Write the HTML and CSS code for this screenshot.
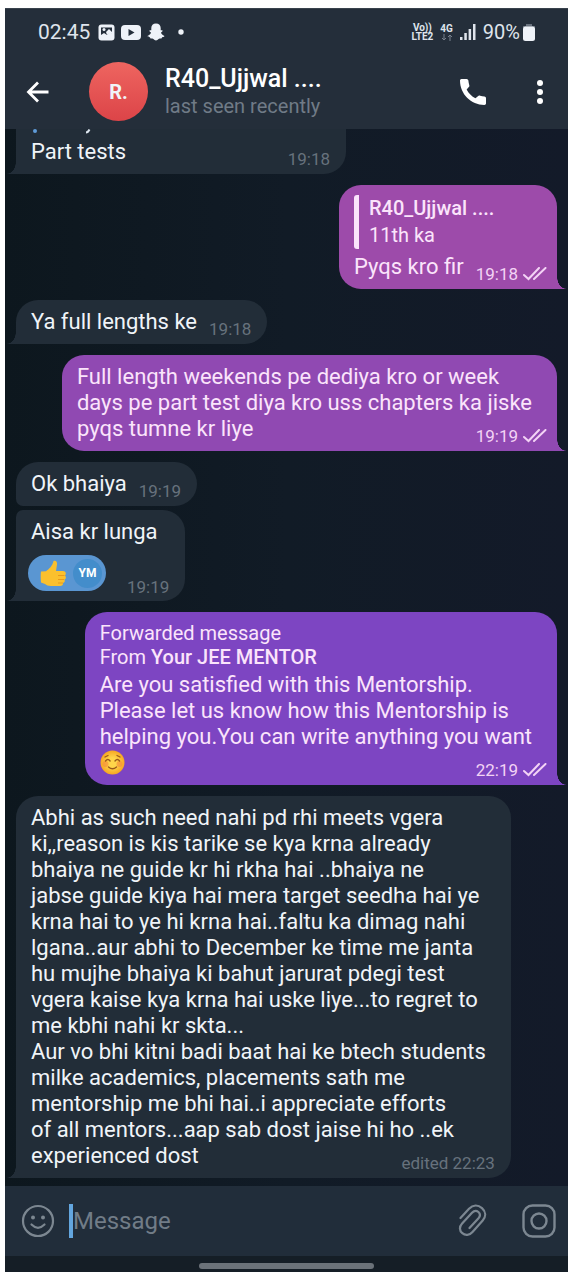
FILE: index.html
```html
<!DOCTYPE html>
<html lang="en">
<head>
<meta charset="utf-8">
<meta name="viewport" content="width=device-width, initial-scale=1">
<title>R40_Ujjwal ....</title>
<link rel="stylesheet" href="styles.css">
</head>
<body>
<svg class="defs" aria-hidden="true">
  <symbol id="checks" viewBox="0 0 24 14"><path d="M1 8l4.500 4L16 1M11 12L22.500 1" fill="none" stroke="currentColor" stroke-width="2" stroke-linecap="round"/></symbol>
</svg>
<div class="phone">
  <header class="top">
    <div class="status">
      <span class="clock">02:45</span>
      <svg width="17" height="17" viewBox="0 0 17 17"><rect x="0.500" y="0.500" width="16" height="16" rx="3" fill="#eef2f8"/><path d="M3 3.500h11v6l-2-1.500-3 3-3-2-3 2z" fill="#242e3a"/><circle cx="6" cy="5.500" r="1.500" fill="#eef2f8"/><path d="M8 8l3-3 3 3v2l-2-1-3 2z" fill="#eef2f8"/></svg>
      <svg width="20" height="15" viewBox="0 0 20 15"><rect width="20" height="15" rx="4" fill="#eef2f8"/><path d="M7.500 4v7l6-3.500z" fill="#242e3a"/></svg>
      <svg width="18" height="18" viewBox="0 0 18 18"><path d="M9 .5c3 0 4.700 2 4.700 4.500v2.300c.8.100 1.700-.2 1.900.5.200.8-1.200 1.200-1.600 1.800.5 1.700 1.600 2.700 3.500 3.400-.3 1-1.300 1-2.300 1.200-.4.400-.3 1.100-.9 1.200-1.100 0-1.800-.1-2.700.700-.8.700-1.600 1.400-2.600 1.400s-1.800-.7-2.600-1.400c-.9-.8-1.600-.7-2.700-.7-.6-.1-.5-.8-.9-1.200C1.800 14 .8 14 .5 13c1.900-.7 3-1.700 3.500-3.400-.4-.6-1.800-1-1.600-1.800.2-.7 1.100-.4 1.900-.5V5C4.300 2.500 6 .5 9 .5z" fill="#eef2f8"/></svg>
      <svg class="dot" width="6" height="6" viewBox="0 0 6 6"><circle cx="3" cy="3" r="2.700" fill="#eef2f8"/></svg>
      <div class="signal">
        <span class="tiny">Vo))<br>LTE2</span>
        <span class="tiny net">4G<svg width="12" height="7" viewBox="0 0 12 7"><path d="M3 0v6M1 4l2 2 2-2M9 7V1M7 3l2-2 2 2" fill="none" stroke="#77808c"/></svg></span>
        <svg width="16" height="16" viewBox="0 0 16 16" fill="#dfe4ec"><rect y="13" width="2.500" height="3"/><rect x="4.300" y="9" width="2.500" height="7"/><rect x="8.600" y="5" width="2.500" height="11"/><rect x="13" width="2.500" height="16"/></svg>
        <span class="percent">90%</span>
        <svg width="12" height="18" viewBox="0 0 12 18"><path d="M3 1h6v2h3v2H0V3h3z" fill="#68717d"/><rect y="3.500" width="12" height="14.500" rx="2.500" fill="#eef2f8"/></svg>
      </div>
    </div>
    <div class="appbar">
      <button class="icon" aria-label="Back"><svg width="24" height="24" viewBox="0 0 24 24"><path d="M22.500 12H2.500M12 2.500L2.500 12l9.500 9.500" fill="none" stroke="#fff" stroke-width="2.800"/></svg></button>
      <div class="avatar">R.</div>
      <div class="who"><h1>R40_Ujjwal ....</h1><p>last seen recently</p></div>
      <button class="icon call" aria-label="Call"><svg width="26" height="26" viewBox="3 3 18 18"><path d="M7.600 10.300c1.300 2.600 3.500 4.800 6.100 6.100l1.700-1.500c.4-.4 1-.5 1.500-.3 1 .3 2 .5 3 .6.600.1 1.100.6 1.100 1.200V20c0 .6-.5 1-1.100 1C10.600 21 3 13.400 3 4.100 3 3.500 3.400 3 4 3h3.600c.6 0 1.100.5 1.200 1.100.1 1 .3 2 .6 3 .2.500.1 1.100-.3 1.500z" fill="#fff"/></svg></button>
      <button class="icon" aria-label="More options"><svg width="6" height="24" viewBox="0 0 6 24" fill="#fff"><circle cx="3" cy="3" r="3"/><circle cx="3" cy="12" r="3"/><circle cx="3" cy="21" r="3"/></svg></button>
    </div>
  </header>

  <main class="chat">
    <article class="msg in cut tail"><svg class="rest" width="80" height="6" viewBox="0 0 80 6"><circle cx="4" cy="2" r="2" fill="#5f9bd8"/><path d="M55 3.500q2 0 3.500-3" fill="none" stroke="#dce5ee" stroke-width="2"/></svg>Part tests<time>19:18</time></article>

    <article class="msg out tail pink"><blockquote><b>R40_Ujjwal ....</b><br>11th ka</blockquote>Pyqs kro fir<time>19:18 <svg width="24" height="14"><use href="#checks"/></svg></time></article>

    <article class="msg in tail">Ya full lengths ke<time>19:18</time></article>

    <article class="msg out tail violet">Full length weekends pe dediya kro or week
days pe part test diya kro uss chapters ka jiske
pyqs tumne kr liye<time>19:19 <svg width="24" height="14"><use href="#checks"/></svg></time></article>

    <article class="msg in first">Ok bhaiya<time>19:19</time></article>

    <article class="msg in tail next">Aisa kr lunga<div class="reactions"><button class="reaction" aria-label="Thumbs up from YM"><svg width="27" height="27" viewBox="0 0 27 27"><path d="M13.500 1c2-1 4 .500 3.500 3.500L16 11h7c3 0 3.500 3 2 4.500 1.500 1.500 1 3.500-.5 4 .800 1.700 0 3.200-1.500 3.500.300 2-.800 3-3 3h-9c-3 0-4.500-.7-6-2l-4-1.500C.7 18 .5 15 1 11.500l5-.3C9 9 12.500 6 13.500 1z" fill="#fbc02d"/><path d="M18 15.500h6.500M18 19.500h6M18 23h5" stroke="#e89a1c" fill="none"/></svg><span>YM</span></button><time>19:19</time></div></article>

    <article class="msg out tail purple"><p class="forward">Forwarded message<br>From <b>Your JEE MENTOR</b></p>Are you satisfied with this Mentorship.
Please let us know how this Mentorship is
helping you.You can write anything you want
<svg class="emoji" width="25" height="25" viewBox="0 0 25 25" role="img" aria-label="Smiling face"><defs><radialGradient id="face"><stop offset="0.400" stop-color="#ffd54a"/><stop offset="1" stop-color="#f6a623"/></radialGradient></defs><circle cx="12.500" cy="12.500" r="12" fill="url(#face)"/><circle cx="5.500" cy="14" r="3" fill="#f58a3c" opacity=".6"/><circle cx="19.500" cy="14" r="3" fill="#f58a3c" opacity=".6"/><path d="M5.500 11q2.300-3 4.600 0M15 11q2.300-3 4.600 0M8.500 17q4 3.500 8 0M5 7l3-1.500M20 7l-3-1.500" fill="none" stroke="#9a5a1c" stroke-width="1.300" stroke-linecap="round"/></svg><time>22:19 <svg width="24" height="14"><use href="#checks"/></svg></time></article>

    <article class="msg in tail">Abhi as such need nahi pd rhi meets vgera
ki,,reason is kis tarike se kya krna already
bhaiya ne guide kr hi rkha hai ..bhaiya ne
jabse guide kiya hai mera target seedha hai ye
krna hai to ye hi krna hai..faltu ka dimag nahi
lgana..aur abhi to December ke time me janta
hu mujhe bhaiya ki bahut jarurat pdegi test
vgera kaise kya krna hai uske liye...to regret to
me kbhi nahi kr skta...
Aur vo bhi kitni badi baat hai ke btech students
milke academics, placements sath me
mentorship me bhi hai..i appreciate efforts
of all mentors...aap sab dost jaise hi ho ..ek
experienced dost<time>edited 22:23</time></article>
  </main>

  <footer class="composer">
    <button class="icon" aria-label="Emoji"><svg width="34" height="34" viewBox="0 0 34 34"><circle cx="17" cy="17" r="15" fill="none" stroke="#7c8791" stroke-width="2.200"/><circle cx="12" cy="13.500" r="2" fill="#7c8791"/><circle cx="22" cy="13.500" r="2" fill="#7c8791"/><path d="M10.500 20.500q6.500 6.500 13 0" fill="none" stroke="#7c8791" stroke-width="2.200" stroke-linecap="round"/></svg></button>
    <input class="field" type="text" placeholder="Message" aria-label="Message">
    <button class="icon clip" aria-label="Attach"><svg width="30" height="34" viewBox="0 0 30 34"><path d="M2.500 14L11 4.800C15 .7 20 .7 24 4.200c4 3.600 4.200 8.300.7 12.300L14.500 28c-3 3.500-7.300 3.700-10.200 1.200-3-2.600-3.200-6.400-.2-9.700L14 8.800c2-2.200 4.600-2.300 6.400-.8 1.900 1.700 1.900 4.100.1 6.200L11.500 24" fill="none" stroke="#7c8791" stroke-width="2.200" stroke-linecap="round"/></svg></button>
    <button class="icon" aria-label="Camera"><svg width="34" height="34" viewBox="0 0 34 34"><rect x="1.500" y="1.500" width="31" height="31" rx="9" fill="none" stroke="#7c8791" stroke-width="2.400"/><circle cx="17" cy="17" r="7.500" fill="none" stroke="#7c8791" stroke-width="2.400"/></svg></button>
  </footer>
  <div class="gesture"><span></span></div>
</div>
</body>
</html>
```
FILE: styles.css
```css
* { box-sizing: border-box; }

body {
  margin: 0;
  min-height: 100vh;
  display: flex;
  padding: 8px 5px;
  background: #fff;
  font-family: Roboto, sans-serif;
  color: #f0f4f8;
}

.defs { position: absolute; width: 0; height: 0; }

.phone {
  flex: 1;
  min-width: 0;
  display: flex;
  flex-direction: column;
}

svg { flex: none; display: block; }

button {
  border: 0;
  padding: 0;
  background: none;
  color: inherit;
  font: inherit;
}

/* Header */
.top {
  background: #242e3a;
  border-top: 1px solid #39424d;
}

.status {
  display: flex;
  align-items: center;
  gap: 6px;
  height: 45px;
  padding: 1px 33px 0;
  color: #dfe4ec;
}

.clock { font-size: 21px; margin-right: 2px; }
.dot { margin-left: 7px; }

.signal {
  display: flex;
  align-items: center;
  gap: 7px;
  margin-left: auto;
}

.tiny {
  font-size: 10px;
  line-height: 9px;
  font-weight: 700;
  text-align: center;
}

.net svg { margin: 1px auto 0; }
.percent { font-size: 20px; margin-right: -4px; }

.appbar {
  display: flex;
  align-items: center;
  height: 75px;
  padding: 0 25px 0 21px;
}

.avatar {
  display: grid;
  place-items: center;
  width: 59px;
  height: 59px;
  margin: 0 17px 0 39px;
  border-radius: 50%;
  background: linear-gradient(#ee6560, #dc4448);
  font-size: 20px;
  font-weight: 700;
}

.who { flex: 1; }

.who h1 {
  margin: 0;
  font-size: 25px;
  line-height: 28px;
  font-weight: 500;
  color: #fff;
}

.who p {
  margin: 0;
  font-size: 20px;
  line-height: 26px;
  color: #707b87;
}

.call { margin-right: 51px; }

/* Conversation */
.chat {
  flex: 1;
  display: flex;
  flex-direction: column;
  align-items: flex-start;
  gap: 11px;
  padding: 0 11px 8px;
  background: linear-gradient(90deg, #0d171e, #111b26 50%, #131a29);
}

.msg {
  position: relative;
  padding: 9px 25px 9px 15px;
  border-radius: 22px;
  font-size: 22px;
  line-height: 26px;
  white-space: pre-line;
}

.in {
  --tone: #222d38;
  background: var(--tone);
}

.out {
  align-self: flex-end;
  background: var(--tone);
  color: #fbe4fb;
}

.pink { --tone: #9d4baa; }
.violet { --tone: #9049b2; }
.purple { --tone: #7d45c2; }

.in.tail { border-bottom-left-radius: 0; }
.out.tail { border-bottom-right-radius: 0; }

.tail::after {
  content: "";
  position: absolute;
  bottom: 0;
  width: 9px;
  height: 12px;
}

.in.tail::after {
  right: 100%;
  background: radial-gradient(ellipse 9px 12px at 0 0, transparent 95%, var(--tone));
}

.out.tail::after {
  left: 100%;
  background: radial-gradient(ellipse 9px 12px at 100% 0, transparent 95%, var(--tone));
}

.in.cut {
  min-width: 330px;
  padding-top: 0;
  border-top-left-radius: 0;
  border-top-right-radius: 0;
}

.rest { margin-bottom: 4px; }
.in.first { border-bottom-left-radius: 7px; }

.in.next {
  margin-top: -7px;
  padding-bottom: 10px;
  border-top-left-radius: 7px;
}

.msg time {
  float: right;
  display: flex;
  align-items: center;
  gap: 5px;
  margin: 10px -9px -4px 12px;
  font-size: 17px;
  line-height: 20px;
  color: #67727d;
}

.out time {
  margin-right: -15px;
  color: #f3d3f5;
}

blockquote {
  margin: 1px 0 5px;
  padding-left: 10px;
  border-left: 5px solid #fbe4fb;
  border-radius: 3px;
  font-size: 20px;
  line-height: 27px;
}

b { font-weight: 500; }

.forward {
  margin: 0 0 3px;
  font-size: 20px;
  line-height: 24px;
}

.emoji { display: inline-block; vertical-align: top; }

.reactions {
  display: flex;
  align-items: flex-end;
  gap: 21px;
  margin: 10px 0 0 -3px;
}

.msg .reactions time { margin: 0 -9px -6px 0; }

.reaction {
  display: flex;
  align-items: center;
  gap: 6px;
  height: 36px;
  padding: 0 4px 0 12px;
  border-radius: 18px;
  background: #5a96d2;
}

.reaction span {
  display: grid;
  place-items: center;
  width: 29px;
  height: 29px;
  border-radius: 50%;
  background: #438dcb;
  color: #fff;
  font-size: 12px;
  font-weight: 700;
}

/* Message entry */
.composer {
  display: flex;
  align-items: center;
  height: 70px;
  padding: 0 12px 0 16px;
  background: #212d3a;
}

.field {
  flex: 1;
  min-width: 0;
  height: 34px;
  margin: 0 10px 0 14px;
  padding: 0;
  border: 0;
  border-left: 4px solid #63a6df;
  background: none;
  color: #f0f4f8;
  font: 24px Roboto, sans-serif;
}

.field::placeholder { color: #717c87; opacity: 1; }
.clip { margin-right: 34px; }

.gesture {
  display: grid;
  place-items: center;
  height: 16px;
  background: #151e26;
}

.gesture span {
  width: 31%;
  height: 6px;
  margin-top: 3px;
  border-radius: 3px;
  background: #6b7279;
}
```
